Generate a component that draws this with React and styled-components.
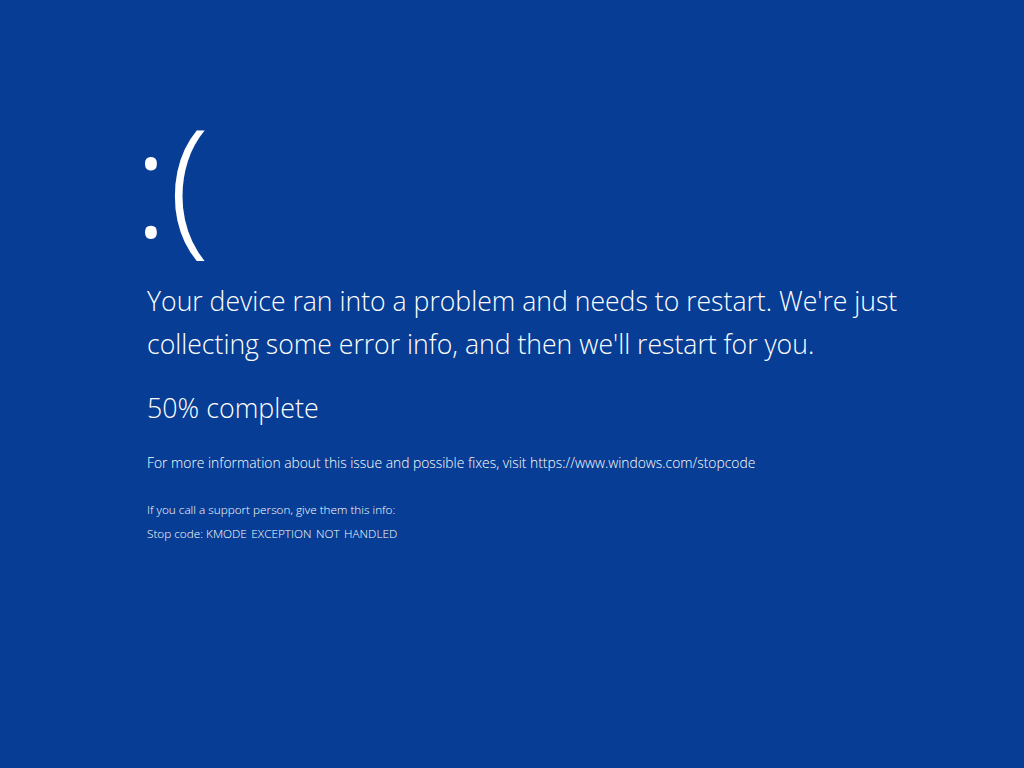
import React from "react";
import styled, { createGlobalStyle } from "styled-components";

const Global = createGlobalStyle`
  html, body { margin: 0; padding: 0; background: #073d94; }
  body { font-family: "Open Sans", "Noto Sans", sans-serif; color: #ffffff; }
`;

const Screen = styled.div`
  width: 1024px;
  height: 768px;
  background: #073d94;
  box-sizing: border-box;
  padding: 94px 0 0 147px;
  display: flex;
  flex-direction: column;
  font-weight: 300;
`;

const Frown = styled.div`
  font-size: 150px;
  line-height: 170px;
  font-weight: 300;
  margin-left: -14px;
  height: 170px;
  margin-bottom: 16px;
`;

const Lead = styled.p`
  margin: 0;
  font-size: 26.6px;
  line-height: 43px;
  width: 800px;
`;

const Progress = styled.p`
  margin: 20px 0 0;
  font-size: 26.8px;
  line-height: 43px;
`;

const Info = styled.p`
  margin: 22px 0 0;
  font-size: 13.85px;
  line-height: 24px;
`;

const Support = styled.div`
  margin-top: 22px;
  display: flex;
  flex-direction: column;
  font-size: 11.75px;
  line-height: 24px;
`;

const Code = styled.span`
  word-spacing: 1.5px;
`;

export default function App() {
  return (
    <>
      <Global />
      <Screen>
        <Frown>:(</Frown>
        <Lead>
          Your device ran into a problem and needs to restart. We're just
          collecting some error info, and then we'll restart for you.
        </Lead>
        <Progress>50% complete</Progress>
        <Info>
          For more information about this issue and possible fixes, visit
          https://www.windows.com/stopcode
        </Info>
        <Support>
          <span>If you call a support person, give them this info:</span>
          <span>
            Stop code: <Code>KMODE EXCEPTION NOT HANDLED</Code>
          </span>
        </Support>
      </Screen>
    </>
  );
}
